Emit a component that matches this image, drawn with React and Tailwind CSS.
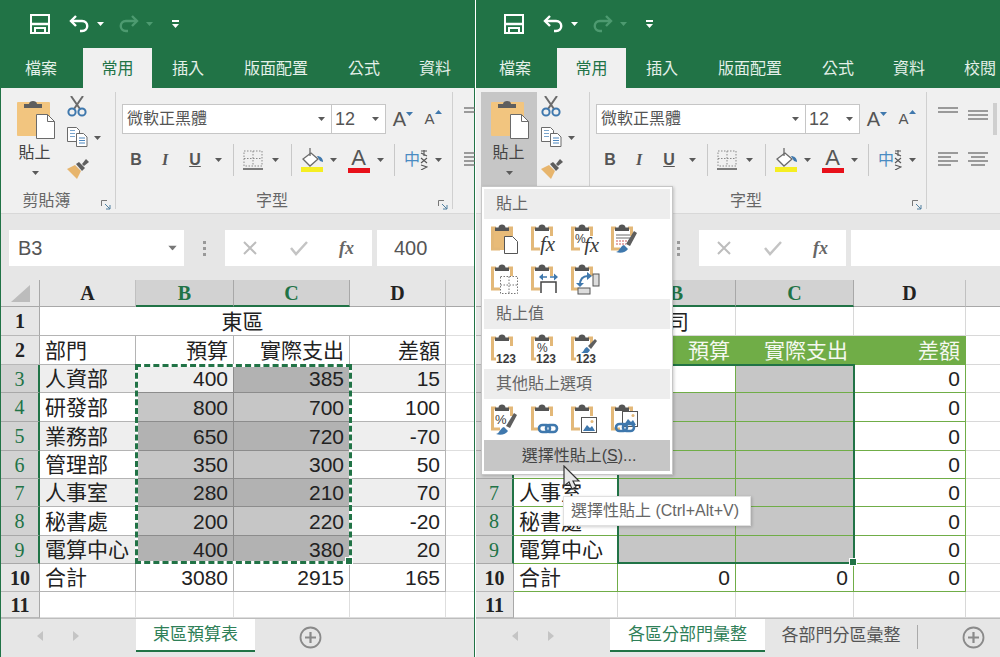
import React from "react";
import clsx from "clsx";

const departments = ["人資部", "研發部", "業務部", "管理部", "人事室", "秘書處", "電算中心"];
const eastRows = [
  [400, 385, 15],
  [800, 700, 100],
  [650, 720, -70],
  [350, 300, 50],
  [280, 210, 70],
  [200, 220, -20],
  [400, 380, 20],
];
const ribbonTabs = [
  ["檔案", "w-[81px] pr-[3px]"],
  ["常用", "w-[69px]"],
  ["插入", "w-[72px]"],
  ["版面配置", "w-[104px]"],
  ["公式", "w-[72px]"],
  ["資料", "w-[70px]"],
  ["校閱", "w-[72px]"],
];

const Caret = ({ color = "#5a5a5a", className }) => (
  <svg width="7" height="4" viewBox="0 0 7 4" className={className}>
    <path d="M0 0h7L3.500 4z" fill={color} />
  </svg>
);

const SaveIcon = () => (
  <svg width="20" height="20" viewBox="0 0 20 20" fill="none" stroke="#fff" strokeWidth="2">
    <path d="M1 1h18v18H1z" />
    <path d="M1 10h18" strokeWidth="2.500" />
    <path d="M5 19v-5h10v5" />
  </svg>
);

const UndoIcon = ({ stroke = "#fff" }) => (
  <svg width="21" height="18" viewBox="0 0 21 18" fill="none" stroke={stroke} strokeWidth="2.400">
    <path d="M7 1 2 6l5 5" />
    <path d="M2 6h11c7 0 7 10 0 10h-2" />
  </svg>
);

const QuickAccess = ({ pad }) => (
  <div className={clsx("flex h-[48px] items-center", pad)}>
    <div className="ml-[28px]"><SaveIcon /></div>
    <div className="ml-[19px]"><UndoIcon /></div>
    <Caret color="#ffffff" className="ml-[7px]" />
    <div className="ml-[14px] -scale-x-100"><UndoIcon stroke="#4d9a70" /></div>
    <Caret color="#4d9a70" className="ml-[7px]" />
    <div className="ml-[19px] flex flex-col items-center gap-[2px]">
      <div className="h-[1.5px] w-[7px] bg-white" />
      <Caret color="#ffffff" />
    </div>
  </div>
);

const RibbonTabs = ({ pad }) => (
  <div className={clsx("flex h-[40px] items-stretch whitespace-nowrap text-[16px]", pad)}>
    {ribbonTabs.map(([label, width], i) => (
      <div
        key={label}
        className={clsx(
          "flex shrink-0 items-center justify-center pt-[1px]",
          width,
          i === 1 ? "bg-[#f0f0f0] text-[#217346]" : "text-[#e4f0e9]"
        )}
      >
        {label}
      </div>
    ))}
  </div>
);

const PasteBig = () => (
  <svg width="38" height="40" viewBox="0 0 38 40">
    <rect x="0" y="3" width="33" height="34" rx="1" fill="#f2c57f" />
    <path d="M7 9V5h5c0-4 8-4 8 0h5v4z" fill="#5e5e5e" />
    <path d="M19.500 15.500h11l7 7v17h-18z" fill="#fff" stroke="#6a6a6a" />
    <path d="M30.500 15.500v7h7" fill="none" stroke="#6a6a6a" />
  </svg>
);

const ScissorsIcon = () => (
  <svg width="20" height="21" viewBox="0 0 20 21" fill="none">
    <path d="M4 0l9 13M16 0 7 13" stroke="#6b6b6b" strokeWidth="2" />
    <circle cx="5" cy="16" r="3.600" stroke="#3f78ad" strokeWidth="2" />
    <circle cx="15" cy="16" r="3.600" stroke="#3f78ad" strokeWidth="2" />
  </svg>
);

const CopyIcon = () => (
  <svg width="21" height="20" viewBox="0 0 21 20" fill="#fff" stroke="#6b6b6b">
    <path d="M.500.500h9l3 3v11H.500z" />
    <path d="M3 3.500h5M3 6.500h5M3 9.500h5" stroke="#7aa5cc" />
    <path d="M9.500 6.500h7l3.500 3.500v9.500H9.500z" />
    <path d="M12 11h6M12 13.500h6M12 16h6" stroke="#4d86bd" />
  </svg>
);

const PainterIcon = () => (
  <svg width="22" height="20" viewBox="0 0 22 20">
    <path d="M0 10l8-4 6 6-4 8z" fill="#e7b56d" />
    <path d="M9 5l3-2 6 6-3 3z" fill="#5e5e5e" />
    <path d="M15 5l4-5 3 3-5 4z" fill="#5e5e5e" />
  </svg>
);

const BorderIcon = () => (
  <svg width="20" height="20" viewBox="0 0 20 20" fill="none" stroke="#8a8a8a" strokeDasharray="1.500 1.500">
    <path d="M1 1h18v15H1zM10 1v15M1 8.500h18" />
    <path d="M0 19h20" strokeDasharray="none" strokeWidth="1.500" stroke="#555" />
  </svg>
);

const BucketIcon = () => (
  <svg width="24" height="24" viewBox="0 0 24 24">
    <path d="M10 5 2 11l7 7 8-7z" fill="#fff" stroke="#6b6b6b" strokeWidth="1.300" />
    <path d="M9 0v8" stroke="#6b6b6b" strokeWidth="1.300" />
    <path d="M16 8c3 0 6 2 6 6l-3-1z" fill="#3f78ad" />
    <rect x="0" y="19" width="22" height="5" fill="#f5ee22" />
  </svg>
);

const PhoneticIcon = () => (
  <span className="flex items-center">
    <span className="text-[16px] leading-none text-[#4a8bc2]">中</span>
    <svg width="8" height="20" viewBox="0 0 8 20" fill="none" stroke="#555" strokeWidth="1.100">
      <path d="M1 1h6M4 0v6M1 3l6 3M1 8l6 5M7 8l-6 5M1 15l6 2-6 3" />
    </svg>
  </span>
);

const AlignLines = ({ rows }) => (
  <svg width="20" height="14" viewBox="0 0 20 14" stroke="#6b6b6b" strokeWidth="1.300">
    {rows.map(([x1, x2, y]) => (
      <line key={y} x1={x1} x2={x2} y1={y} y2={y} />
    ))}
  </svg>
);

const VSep = () => <div className="mx-auto h-[32px] w-[1px] bg-[#c8c8c8]" />;

const DialogLauncher = () => (
  <svg width="10" height="10" viewBox="0 0 10 10" fill="none" stroke="#777">
    <path d="M.500 6V.500H6" />
    <path d="M4 4l5 5M9 5v4H5" stroke="#4f7f9f" />
  </svg>
);

const GroupLabel = ({ text }) => (
  <div className="relative flex h-[24px] items-center justify-center text-[16px] text-[#666]">
    <span className="mr-[24px] whitespace-nowrap">{text}</span>
    <div className="absolute right-[4px] top-[11px]">
      <DialogLauncher />
    </div>
  </div>
);

const Ribbon = ({ pad, pasteOpen }) => (
  <div className={clsx("flex h-[126px] border-b border-[#d8d8d8] bg-[#f0f0f0]", pad)}>
    {/* clipboard */}
    <div className="my-[4px] flex w-[114px] shrink-0 flex-col border-r border-[#d0d0d0]">
      <div className="flex h-[94px] pl-[5px]">
        <div
          className={clsx(
            "flex h-[94px] w-[56px] flex-col items-center pl-[2px] pt-[7px] text-[16px] leading-none text-[#444]",
            pasteOpen && "bg-[#c6c6c6]"
          )}
        >
          <PasteBig />
          <span className="mr-[3px] mt-[6px]">貼上</span>
          <Caret className="mr-[2px] mt-[10px]" />
        </div>
        <div className="flex w-[50px] flex-col pl-[4px] pt-[4px]">
          <div className="flex h-[31px]"><ScissorsIcon /></div>
          <div className="flex h-[32px] items-start gap-[6px]">
            <CopyIcon />
            <Caret className="mt-[9px]" />
          </div>
          <PainterIcon />
        </div>
      </div>
      <div className="mt-[3px]">
        <GroupLabel text="剪貼簿" />
      </div>
    </div>

    {/* font */}
    <div className="my-[4px] flex w-[337px] shrink-0 flex-col border-r border-[#d0d0d0]">
      <div className="mt-[12px] flex h-[30px] items-stretch pl-[6px]">
        <div className="flex w-[210px] items-center justify-between border border-[#c6c6c6] bg-white pl-[4px] pr-[6px] text-[16px] text-[#555]">
          微軟正黑體
          <Caret />
        </div>
        <div className="flex w-[54px] items-center justify-between border border-l-0 border-[#c6c6c6] bg-white pl-[3px] pr-[6px] text-[18px] text-[#555]">
          12
          <Caret />
        </div>
        <div className="flex w-[32px] items-center justify-center pl-[2px] text-[20px] text-[#555]">
          A<Caret color="#3f78ad" className="-mt-[10px]" />
        </div>
        <div className="flex w-[28px] items-center justify-center pl-[2px] text-[15px] text-[#555]">
          A<Caret color="#3f78ad" className="-mt-[14px] rotate-180" />
        </div>
      </div>
      <div className="mt-[11px] flex h-[30px] items-center pl-[6px] text-[#555]">
        <span className="w-[28px] text-center text-[16px] font-bold">B</span>
        <span className="w-[30px] text-center font-['Liberation_Serif',serif] text-[16px] font-bold italic">I</span>
        <span className="w-[30px] text-center text-[16px] font-bold underline">U</span>
        <div className="flex w-[16px] justify-center"><Caret /></div>
        <div className="w-[14px]"><VSep /></div>
        <div className="flex w-[26px] justify-center"><BorderIcon /></div>
        <div className="flex w-[18px] justify-center"><Caret /></div>
        <div className="w-[14px]"><VSep /></div>
        <div className="flex w-[29px] justify-center"><BucketIcon /></div>
        <div className="flex w-[13px] justify-center"><Caret /></div>
        <div className="ml-[4px] flex w-[29px] flex-col items-center">
          <span className="text-[22px] leading-[20px]">A</span>
          <div className="h-[5px] w-[22px] bg-[#e8101a]" />
        </div>
        <div className="flex w-[14px] justify-center"><Caret /></div>
        <div className="w-[15px]"><VSep /></div>
        <div className="flex w-[28px] justify-center"><PhoneticIcon /></div>
        <div className="flex w-[16px] justify-center"><Caret /></div>
      </div>
      <div className="mt-[14px]">
        <GroupLabel text="字型" />
      </div>
    </div>

    {/* alignment, runs off the pane */}
    <div className="flex shrink-0 flex-col gap-[31px] pl-[11px] pt-[19px]">
      <div className="flex gap-[10px]">
        <AlignLines rows={[[0, 20, 1], [0, 20, 5]]} />
        <AlignLines rows={[[0, 20, 4], [0, 20, 8], [0, 20, 12]]} />
      </div>
      <div className="flex gap-[10px]">
        <AlignLines rows={[[0, 20, 1], [0, 13, 5], [0, 20, 9], [0, 13, 13]]} />
        <AlignLines rows={[[0, 20, 1], [3, 17, 5], [0, 20, 9], [3, 17, 13]]} />
      </div>
    </div>
  </div>
);

const FormulaBar = ({ pad, value }) => (
  <div className={clsx("flex h-[66px] items-start bg-[#e6e6e6] pt-[16px]", pad)}>
    <div className="ml-[7px] flex h-[36px] w-[175px] shrink-0 items-center justify-between bg-white pl-[9px] pr-[8px] text-[20px] text-[#555]">
      B3
      <Caret color="#777" className="scale-125" />
    </div>
    <div className="flex h-[36px] w-[41px] shrink-0 flex-col items-center justify-center gap-[3px]">
      <div className="h-[3px] w-[3px] bg-[#999]" />
      <div className="h-[3px] w-[3px] bg-[#999]" />
      <div className="h-[3px] w-[3px] bg-[#999]" />
    </div>
    <div className="flex h-[36px] w-[147px] shrink-0 items-center bg-white pl-[17px]">
      <svg width="16" height="16" viewBox="0 0 16 16" stroke="#bdbdbd" strokeWidth="2">
        <path d="M2 2l12 12M14 2 2 14" />
      </svg>
      <svg width="18" height="16" viewBox="0 0 18 16" fill="none" stroke="#c4c4c4" strokeWidth="2.500" className="ml-[32px]">
        <path d="M1 8l5 6L17 2" />
      </svg>
      <span className="ml-[31px] font-['Liberation_Serif',serif] text-[18px] font-bold italic text-[#666]">fx</span>
    </div>
    <div className="ml-[5px] flex h-[36px] min-w-0 flex-1 items-center bg-white pl-[17px] text-[20px] text-[#555]">{value}</div>
  </div>
);

const ColHead = ({ children, on, className }) => (
  <div
    className={clsx(
      "flex items-center justify-center border-r font-['Liberation_Serif',serif] text-[20px] font-bold",
      on
        ? "border-[#a8a8a8] border-b-2 border-b-[#217346] bg-[#d2d2d2] text-[#217346]"
        : "border-[#c0c0c0] border-b border-b-[#a8a8a8] bg-[#e6e6e6] text-[#222]",
      className
    )}
  >
    {children}
  </div>
);

const RowHead = ({ children, on }) => (
  <div
    className={clsx(
      "flex items-center justify-center border-b font-['Liberation_Serif',serif] text-[20px]",
      on
        ? "border-[#a8a8a8] border-r-2 border-r-[#217346] bg-[#d2d2d2] text-[#217346]"
        : "border-[#b8b8b8] border-r border-r-[#a8a8a8] bg-[#e6e6e6] font-bold text-[#222]"
    )}
  >
    {children}
  </div>
);

const Cell = ({ children, right, className }) => (
  <div
    className={clsx(
      "flex items-center overflow-hidden whitespace-nowrap border-r border-b px-[5px] text-[21px] leading-none text-[#222]",
      right && "justify-end",
      className
    )}
  >
    {children}
  </div>
);

const Corner = () => (
  <div className="flex items-center justify-center border-r border-b border-[#a8a8a8] bg-[#e6e6e6] pl-[1px]">
    <svg width="19" height="17" viewBox="0 0 19 17">
      <path d="M19 0v17H0z" fill="#bcbcbc" />
    </svg>
  </div>
);

const FillHandle = () => (
  <div className="absolute -bottom-[4px] -right-[4px] h-[8px] w-[8px] border border-white bg-[#217346]" />
);

const EastSheet = () => {
  const line = "border-[#b4b4b4]";
  return (
    <div className="relative h-[338px] overflow-hidden bg-white">
      <div className="grid h-full grid-cols-[39px_96px_98px_116px_96px_1fr] grid-rows-[27px_29px_29px_28px_29px_29px_28px_28px_29px_28px_28px_26px]">
        <Corner />
        <ColHead>A</ColHead>
        <ColHead on>B</ColHead>
        <ColHead on>C</ColHead>
        <ColHead>D</ColHead>
        <ColHead className="border-r-0" />

        <RowHead>1</RowHead>
        <Cell className={clsx("col-span-4 justify-center", line)}>東區</Cell>
        <Cell className="border-r-0 border-[#dedede]" />

        <RowHead>2</RowHead>
        <Cell className={line}>部門</Cell>
        <Cell right className={line}>預算</Cell>
        <Cell right className={line}>實際支出</Cell>
        <Cell right className={line}>差額</Cell>
        <Cell className="border-r-0 border-[#dedede]" />

        {departments.map((name, i) => {
          const band = i % 2 === 0;
          const active = i === 0;
          return (
            <React.Fragment key={name}>
              <RowHead on>{i + 3}</RowHead>
              <Cell className={clsx(line, band ? "bg-[#eeeeee]" : "bg-white")}>{name}</Cell>
              <Cell
                right
                className={clsx(
                  "border-[#8c8c8c]",
                  active ? "bg-[#eeeeee]" : band ? "bg-[#b2b2b2]" : "bg-[#c6c6c6]"
                )}
              >
                {eastRows[i][0]}
              </Cell>
              <Cell right className={clsx("border-[#8c8c8c]", band ? "bg-[#b2b2b2]" : "bg-[#c6c6c6]")}>
                {eastRows[i][1]}
              </Cell>
              <Cell right className={clsx(line, band ? "bg-[#eeeeee]" : "bg-white")}>{eastRows[i][2]}</Cell>
              <Cell className="border-r-0 border-[#dedede]" />
            </React.Fragment>
          );
        })}

        <RowHead>10</RowHead>
        <Cell className={line}>合計</Cell>
        <Cell right className={line}>3080</Cell>
        <Cell right className={line}>2915</Cell>
        <Cell right className={line}>165</Cell>
        <Cell className="border-r-0 border-[#dedede]" />

        <RowHead>11</RowHead>
        <Cell className="border-[#dedede]" />
        <Cell className="border-[#dedede]" />
        <Cell className="border-[#dedede]" />
        <Cell className="border-[#dedede]" />
        <Cell className="border-r-0 border-[#dedede]" />
      </div>

      {/* copy marquee */}
      <div className="absolute left-[134px] top-[84px] h-[200px] w-[217px] border-[3px] border-white">
        <div className="-m-[3px] h-[200px] w-[217px] border-[3px] border-dashed border-[#217346]" />
        <FillHandle />
      </div>
    </div>
  );
};

const RegionSheet = () => {
  const line = "border-[#70ad47]";
  const light = "border-[#d8d8d8]";
  const selected = "border-[#70ad47] bg-[#c6c6c6]";
  return (
    <div className="relative h-[338px] overflow-hidden bg-white">
      <div className="grid h-full grid-cols-[38px_104px_118px_118px_112px_1fr] grid-rows-[27px_29px_29px_28px_29px_29px_28px_28px_29px_28px_28px_26px]">
        <Corner />
        <ColHead>A</ColHead>
        <ColHead on>B</ColHead>
        <ColHead on>C</ColHead>
        <ColHead>D</ColHead>
        <ColHead className="border-r-0" />

        <RowHead>1</RowHead>
        <Cell right className={clsx("col-span-2 pr-[46px]", light)}>司</Cell>
        <Cell className={light} />
        <Cell className={light} />
        <Cell className={clsx("border-r-0", light)} />

        <RowHead>2</RowHead>
        <Cell className="border-[#70ad47] bg-[#70ad47]" />
        <Cell right className="border-[#70ad47] bg-[#70ad47] text-[#f4f8ef]">預算</Cell>
        <Cell right className="border-[#70ad47] bg-[#70ad47] text-[#f4f8ef]">實際支出</Cell>
        <Cell right className="border-[#70ad47] bg-[#70ad47] text-[#f4f8ef]">差額</Cell>
        <Cell className={clsx("border-r-0", light)} />

        {departments.map((name, i) => (
          <React.Fragment key={name}>
            <RowHead on>{i + 3}</RowHead>
            {/* rows 3-6 of column A sit under the paste menu */}
            <Cell className={line}>{i > 3 && name}</Cell>
            <Cell className={i === 0 ? line : selected} />
            <Cell className={selected} />
            <Cell right className={line}>0</Cell>
            <Cell className={clsx("border-r-0", light)} />
          </React.Fragment>
        ))}

        <RowHead>10</RowHead>
        <Cell className={line}>合計</Cell>
        <Cell right className={line}>0</Cell>
        <Cell right className={line}>0</Cell>
        <Cell right className={line}>0</Cell>
        <Cell className={clsx("border-r-0", light)} />

        <RowHead>11</RowHead>
        <Cell className={light} />
        <Cell className={light} />
        <Cell className={light} />
        <Cell className={light} />
        <Cell className={clsx("border-r-0", light)} />
      </div>

      {/* selection box */}
      <div className="absolute left-[141px] top-[84px] h-[200px] w-[238px] border-2 border-[#217346]">
        <FillHandle />
      </div>
    </div>
  );
};

const PlusCircle = () => (
  <svg width="23" height="23" viewBox="0 0 23 23" fill="none" stroke="#8a8a8a">
    <circle cx="11.500" cy="11.500" r="10" strokeWidth="1.800" />
    <path d="M11.500 6v11M6 11.500h11" strokeWidth="2.200" />
  </svg>
);

const SheetArrows = () => (
  <div className="flex w-full items-center gap-[30px] pl-[36px]">
    <svg width="6" height="10" viewBox="0 0 6 10"><path d="M6 0v10L0 5z" fill="#c4c4c4" /></svg>
    <svg width="6" height="10" viewBox="0 0 6 10"><path d="M0 0v10l6-5z" fill="#c4c4c4" /></svg>
  </div>
);

const ActiveSheetTab = ({ label, className }) => (
  <div
    className={clsx(
      "flex h-[33px] shrink-0 items-center justify-center border-b-2 border-[#217346] bg-white text-[17px] text-[#2f8058]",
      className
    )}
  >
    {label}
  </div>
);

const PaneTabs = ({ wide }) => (
  <div className="flex h-[39px] items-start border-t border-[#bdbdbd] bg-[#e6e6e6]">
    <div className={clsx("flex h-[33px] shrink-0 items-center", wide ? "w-[134px]" : "w-[135px]")}>
      <SheetArrows />
    </div>
    {wide ? (
      <>
        <ActiveSheetTab label="各區分部門彙整" className="w-[155px]" />
        <div className="flex h-[33px] w-[152px] shrink-0 items-center justify-center text-[17px] text-[#555]">各部門分區彙整</div>
        <div className="mt-[6px] h-[24px] w-[1px] shrink-0 bg-[#aaa]" />
        <div className="ml-[44px] mt-[7px]"><PlusCircle /></div>
      </>
    ) : (
      <>
        <ActiveSheetTab label="東區預算表" className="w-[119px]" />
        <div className="ml-[44px] mt-[7px]"><PlusCircle /></div>
      </>
    )}
  </div>
);

/* pieces of the paste gallery */
const ClipBase = ({ filled }) => (
  <g>
    {filled && <rect x="1" y="5" width="21" height="22" fill="#e8bb78" />}
    <path d="M6 5H2.500v21H10M18 5h3.500v8" fill="none" stroke="#e3b878" strokeWidth="3" />
    <path d="M5 8V4.500h3.500c0-4 7-4 7 0H19V8z" fill="#555" />
  </g>
);
const Txt = ({ x, y, size, children, italic, bold, fill = "#3a3a3a" }) => (
  <text
    x={x}
    y={y}
    fontSize={size}
    fill={fill}
    fontStyle={italic ? "italic" : "normal"}
    fontWeight={bold ? "bold" : "normal"}
    fontFamily={italic ? "Liberation Serif" : "Liberation Sans"}
  >
    {children}
  </text>
);
const Brush = ({ x = 0, y = 0 }) => (
  <g transform={`translate(${x} ${y})`}>
    <path d="M0 14c3-1 3-5 6-6l3 3c-1 3-5 5-9 3z" fill="#3f78ad" />
    <path d="M7 7l7-7 2 2-6 8z" fill="#5e5e5e" />
  </g>
);
const Chain = ({ x = 0, y = 0 }) => (
  <g transform={`translate(${x} ${y})`} fill="none" stroke="#3f78ad" strokeWidth="2.600">
    <rect x="1" y="1" width="11" height="7" rx="3.500" />
    <rect x="8" y="1" width="11" height="7" rx="3.500" />
  </g>
);
const Picture = ({ x = 0, y = 0 }) => (
  <g transform={`translate(${x} ${y})`}>
    <rect x=".5" y=".5" width="15" height="15" fill="#fff" stroke="#555" />
    <path d="M2 14l4-6 3 3 2-2 3 5z" fill="#3f78ad" />
    <circle cx="11" cy="4.500" r="1.500" fill="#e3b878" />
  </g>
);

const pasteIcons = {
  all: (
    <>
      <ClipBase filled />
      <path d="M14.500 13.500h8l5 5v12h-13z" fill="#fff" stroke="#555" />
    </>
  ),
  formula: (
    <>
      <ClipBase />
      <Txt x="10" y="28" size="21" italic>fx</Txt>
    </>
  ),
  formulaPct: (
    <>
      <ClipBase />
      <Txt x="5" y="20" size="12">%</Txt>
      <Txt x="14" y="29" size="21" italic>fx</Txt>
    </>
  ),
  keepFormat: (
    <>
      <ClipBase />
      <path d="M6 12h14M6 15h14" stroke="#6b6b6b" />
      <path d="M6 18h14M6 21h10" stroke="#cc5a5a" strokeDasharray="2 1" />
      <path d="M6 29c4-1 4-6 8-7l4 4c-2 3-7 5-12 3z" fill="#3f78ad" />
      <path d="M16 21l8-13 3 2-7 13z" fill="#5e5e5e" />
    </>
  ),
  noBorder: (
    <>
      <ClipBase />
      <path d="M10.500 13.500h17v17h-17zM19 13.500v17M10.500 22h17" fill="#fff" stroke="#777" strokeDasharray="1.500 1.500" />
    </>
  ),
  colWidth: (
    <>
      <ClipBase />
      <path d="M11 30V19h15v11" fill="none" stroke="#444" strokeWidth="1.500" />
      <path d="M10 14h7M20 14h7" stroke="#3f78ad" strokeWidth="1.500" />
      <path d="M13 10.500v7L9 14zM24 10.500v7l4-3.500z" fill="#3f78ad" />
    </>
  ),
  transpose: (
    <>
      <ClipBase />
      <rect x="23" y="11" width="6" height="12" fill="#ddd" stroke="#555" />
      <rect x="8" y="25" width="12" height="6" fill="#ddd" stroke="#555" />
      <path d="M10 22c0-6 3-9 8-9" fill="none" stroke="#3f78ad" strokeWidth="2" />
      <path d="M17 9l5 4-5 4zM6 20h8l-4 4z" fill="#3f78ad" />
    </>
  ),
  values: (
    <>
      <ClipBase />
      <rect x="6" y="20" width="22" height="10" fill="#fff" />
      <Txt x="6" y="30" size="12" bold>123</Txt>
    </>
  ),
  valuesPct: (
    <>
      <ClipBase />
      <Txt x="7" y="19" size="12">%</Txt>
      <rect x="6" y="20" width="22" height="10" fill="#fff" />
      <Txt x="6" y="30" size="12" bold>123</Txt>
    </>
  ),
  valuesFormat: (
    <>
      <ClipBase />
      <Brush x="11" y="6" />
      <rect x="6" y="20" width="22" height="10" fill="#fff" />
      <Txt x="6" y="30" size="12" bold>123</Txt>
    </>
  ),
  formatting: (
    <>
      <ClipBase />
      <Txt x="5" y="21" size="13">%</Txt>
      <path d="M6 31c4-1 4-6 8-7l4 4c-2 3-7 5-12 3z" fill="#3f78ad" />
      <path d="M16 23l8-13 3 2-7 13z" fill="#5e5e5e" />
    </>
  ),
  link: (
    <>
      <ClipBase />
      <Chain x="8" y="21" />
    </>
  ),
  picture: (
    <>
      <ClipBase />
      <Picture x="11" y="14" />
    </>
  ),
  linkedPicture: (
    <>
      <ClipBase />
      <Picture x="12" y="8" />
      <Chain x="5" y="20" />
    </>
  ),
};

const PasteOption = ({ name }) => (
  <svg width="30" height="32" viewBox="0 0 30 32" className="shrink-0">
    {pasteIcons[name]}
  </svg>
);

const MenuHeader = ({ children, className }) => (
  <div className={clsx("flex items-center bg-[#ededed] pl-[12px] text-[16px] text-[#666]", className)}>{children}</div>
);

const IconRow = ({ names }) => (
  <div className="flex h-[40px] items-center gap-[10px] pl-[6px]">
    {names.map((n) => (
      <PasteOption key={n} name={n} />
    ))}
  </div>
);

const PasteMenu = () => (
  <div className="absolute left-[5px] top-[186px] h-[289px] w-[192px] border border-[#c6c6c6] bg-white p-[2px] shadow-[1px_1px_3px_rgba(0,0,0,0.2)]">
    <MenuHeader className="h-[30px]">貼上</MenuHeader>
    <IconRow names={["all", "formula", "formulaPct", "keepFormat"]} />
    <IconRow names={["noBorder", "colWidth", "transpose"]} />
    <MenuHeader className="h-[30px]">貼上值</MenuHeader>
    <IconRow names={["values", "valuesPct", "valuesFormat"]} />
    <MenuHeader className="h-[30px]">其他貼上選項</MenuHeader>
    <IconRow names={["formatting", "link", "picture", "linkedPicture"]} />
    <div className="mt-[1px] flex h-[31px] items-center justify-center bg-[#c6c6c6] pl-[4px] text-[16px] text-[#444]">
      <span>
        選擇性貼上(<span className="underline">S</span>)...
      </span>
    </div>
  </div>
);

const MouseCursor = () => (
  <svg width="18" height="26" viewBox="0 0 18 26" className="absolute left-[87px] top-[465px]">
    <path d="M1 1v20l5-4 3 7 4-2-3-6h6z" fill="#e8e8e8" stroke="#333" strokeWidth="1.200" />
  </svg>
);

const PasteTooltip = () => (
  <div className="absolute left-[87px] top-[496px] flex h-[30px] w-[188px] items-center whitespace-nowrap border border-[#e0e0e0] bg-white pl-[7px] text-[16px] text-[#666] shadow-[1px_1px_3px_rgba(0,0,0,0.2)]">
    選擇性貼上 (Ctrl+Alt+V)
  </div>
);

export default function App() {
  return (
    <div className="flex h-[657px] w-[1000px] gap-[1px] overflow-hidden bg-white font-['Liberation_Sans','Noto_Sans_CJK_TC',sans-serif]">
      <div className="h-full w-[475px] shrink-0 overflow-hidden bg-[#217346]">
        <QuickAccess pad="pl-[2px]" />
        <RibbonTabs pad="pl-[2px]" />
        <div className="border-x border-[#217346]">
          <Ribbon pad="pl-[1px]" />
          <FormulaBar pad="pl-[1px]" value="400" />
          <EastSheet />
          <PaneTabs />
        </div>
      </div>

      <div className="relative h-full w-[524px] shrink-0 overflow-hidden bg-[#217346]">
        <QuickAccess />
        <RibbonTabs />
        <Ribbon pasteOpen />
        <FormulaBar />
        <RegionSheet />
        <PaneTabs wide />
        <div className="absolute right-[3px] top-[103px] h-[32px] w-[4px] bg-[#cfcfcf]" />
        <PasteMenu />
        <PasteTooltip />
        <MouseCursor />
      </div>
    </div>
  );
}
